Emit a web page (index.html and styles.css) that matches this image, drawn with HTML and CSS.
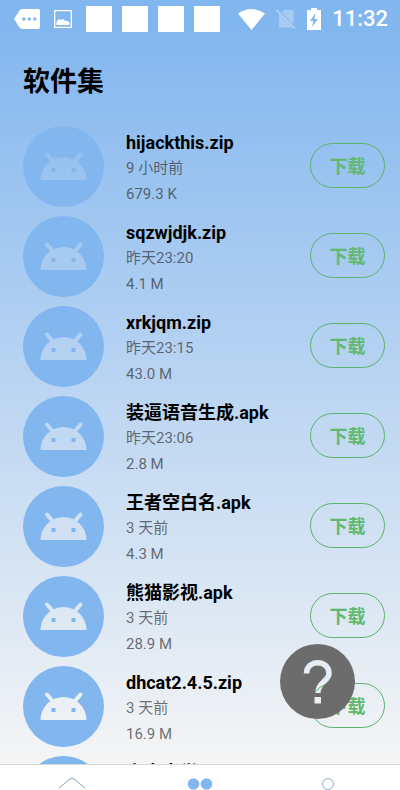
FILE: index.html
```html
<!DOCTYPE html>
<html lang="zh-CN">
<head>
<meta charset="utf-8">
<meta name="viewport" content="width=device-width, initial-scale=1">
<title>软件集</title>
<link rel="stylesheet" href="styles.css">
</head>
<body>
<svg class="defs" aria-hidden="true">
  <g id="head" stroke-linecap="round">
    <path d="M17.500 54a23 23 0 0 1 46 0z"/>
    <path stroke-width="4" d="M24 28.500L30 35.500M57.500 28.500L51.500 35.500"/>
  </g>
  <mask id="disc" maskUnits="userSpaceOnUse" x="0" y="0" width="81" height="81">
    <path fill="#fff" d="M0 0h81v81H0z"/>
    <use href="#head" fill="#000" stroke="#000" stroke-width="0"/>
    <path fill="#fff" d="M28.500 42h4v4h-4zM48.500 42h4v4h-4z"/>
  </mask>
  <symbol id="droid" viewBox="0 0 81 81">
    <circle cx="40.500" cy="40.500" r="40.500" fill="#82b6ef" mask="url(#disc)"/>
  </symbol>
</svg>
<div class="app">
  <header class="status">
    <div class="notices">
      <svg width="26" height="20" viewBox="0 0 26 20"><path fill="#fff" fill-rule="evenodd" d="M8 0H24Q26 0 26 2V18Q26 20 24 20H8Q6.500 20 5.500 18.500L0 10L5.500 1.500Q6.500 0 8 0zM9.800 8.300a1.700 1.700 0 1 0 .01 0zM15.300 8.300a1.700 1.700 0 1 0 .01 0zM20.800 8.300a1.700 1.700 0 1 0 .01 0z"/></svg>
      <svg width="18" height="18" viewBox="0 0 18 18"><path fill="none" stroke="#fff" stroke-width="1.300" d="M.7.7H17.300V17.300H.7z"/><path fill="#fff" d="M2.500 15V12Q4 8 7 10Q9 7.500 11 11Q13.500 10 15.500 13V15z"/></svg>
      <i class="box"></i><i class="box"></i><i class="box"></i><i class="box"></i>
    </div>
    <div class="system">
      <svg width="27" height="21" viewBox="0 0 27 21"><path fill="#fff" d="M0 4.500Q13.500-4.500 27 4.500L13.500 21z"/></svg>
      <svg width="20" height="20" viewBox="0 0 20 20"><g fill="#fff" fill-opacity=".3"><path d="M8 1H17.500V15.500L5.500 3.500z"/><path d="M3 4.500L16.500 18.500H3z"/></g><path stroke="#fff" stroke-opacity=".4" stroke-width="1.500" d="M.5 1L19 19.500"/></svg>
      <svg width="14" height="22" viewBox="0 0 14 22"><path fill="#fff" fill-rule="evenodd" d="M4 0H10V2H14V22H0V2H4zM8.500 5L3 13H6.300L5 19L11 11H7.500z"/></svg>
      <time>11:32</time>
    </div>
  </header>
  <h1>软件集</h1>
  <main>
    <ul class="list">
      <li><svg class="icon"><use href="#droid"/></svg><div class="info"><h2>hijackthis.zip</h2><p>9 小时前</p><p>679.3 K</p></div><button type="button">下载</button></li>
      <li><svg class="icon"><use href="#droid"/></svg><div class="info"><h2>sqzwjdjk.zip</h2><p>昨天23:20</p><p>4.1 M</p></div><button type="button">下载</button></li>
      <li><svg class="icon"><use href="#droid"/></svg><div class="info"><h2>xrkjqm.zip</h2><p>昨天23:15</p><p>43.0 M</p></div><button type="button">下载</button></li>
      <li><svg class="icon"><use href="#droid"/></svg><div class="info"><h2>装逼语音生成.apk</h2><p>昨天23:06</p><p>2.8 M</p></div><button type="button">下载</button></li>
      <li><svg class="icon"><use href="#droid"/></svg><div class="info"><h2>王者空白名.apk</h2><p>3 天前</p><p>4.3 M</p></div><button type="button">下载</button></li>
      <li><svg class="icon"><use href="#droid"/></svg><div class="info"><h2>熊猫影视.apk</h2><p>3 天前</p><p>28.9 M</p></div><button type="button">下载</button></li>
      <li><svg class="icon"><use href="#droid"/></svg><div class="info"><h2>dhcat2.4.5.zip</h2><p>3 天前</p><p>16.9 M</p></div><button type="button">下载</button></li>
      <li><svg class="icon"><use href="#droid"/></svg><div class="info"><h2>安卓大学</h2></div></li>
    </ul>
  </main>
  <nav>
    <a href="#home" aria-label="首页"><svg width="30" height="26" viewBox="0 0 30 26"><path fill="none" stroke="#7ba7bd" d="M2 11L13 2Q15 .5 17 2L28 11"/></svg></a>
    <a href="#apps" aria-label="软件"><svg width="26" height="26" viewBox="0 0 26 26"><g fill="#82b6ef"><circle cx="6.500" cy="7" r="5.800"/><circle cx="19.500" cy="7" r="5.800"/><circle cx="6.500" cy="20" r="5.800"/><circle cx="19.500" cy="20" r="5.800"/></g></svg></a>
    <a href="#me" aria-label="我的"><svg width="26" height="26" viewBox="0 0 26 26"><circle cx="13" cy="7" r="5.500" fill="none" stroke="#8bb4cf"/></svg></a>
  </nav>
  <button type="button" class="help" aria-label="帮助"><svg width="75" height="75" viewBox="0 0 75 75"><mask id="cut"><path fill="#fff" d="M0 0h75v75H0z"/><path fill="none" stroke="#000" stroke-width="5.500" d="M26.500 29.500C26.500 15 49 15 49 29.500C49 37 37.800 38 37.800 49"/><path d="M34.500 53h6.500v6.500h-6.500z"/></mask><circle cx="37.500" cy="37.500" r="37.500" fill="#6c6c6c" mask="url(#cut)"/></svg></button>
</div>
</body>
</html>
```

FILE: styles.css
```css
* { box-sizing: border-box; }
body, h1, h2, p, ul { margin: 0; padding: 0; }
body { font-family: Roboto, "Noto Sans CJK SC", sans-serif; color: #000; }
svg { display: block; flex: none; }
.defs { position: absolute; width: 0; height: 0; }
.app {
  position: relative;
  display: flex;
  flex-direction: column;
  height: 100vh;
  overflow: hidden;
  background: linear-gradient(#82b6ef 0, #82b6ef 3%, #f5f5f5 97%);
}
.status {
  display: flex;
  justify-content: space-between;
  align-items: center;
  height: 38px;
  padding: 0 12px 0 14px;
}
.notices, .system { display: flex; align-items: center; }
.notices { gap: 14px; }
.box { width: 26px; height: 26px; margin-right: -4px; background: #fff; }
.system { gap: 11px; }
.system time { color: #fff; font-size: 22px; font-weight: 500; line-height: 26px; }
h1 { padding: 24px 23px 20px; font-size: 27px; line-height: 40px; font-weight: 700; }
main { flex: 1; min-height: 0; overflow: hidden; }
.list { list-style: none; }
.list li {
  display: flex;
  align-items: flex-start;
  height: 90px;
  padding: 4px 15px 0 23px;
}
.icon { width: 81px; height: 81px; margin-right: 22px; }
.info { flex: 1; min-width: 0; padding-top: 4px; }
.info h2 { font-size: 18px; line-height: 25px; font-weight: 700; }
.info p { color: rgba(50, 50, 50, .7); font-size: 15px; line-height: 26px; }
.list button {
  width: 75px;
  height: 45px;
  margin-top: 17px;
  padding: 2px 0 0;
  border: 1px solid #5bb36c;
  border-radius: 23px;
  background: none;
  color: #62b870;
  font: 700 18px/26px Roboto, "Noto Sans CJK SC", sans-serif;
}
nav {
  display: flex;
  height: 26px;
  overflow: hidden;
  padding: 12px 8px 0;
  border-top: 1px solid #d8d8d8;
  background: #fff;
}
nav a { flex: 1; display: flex; justify-content: center; }
.help {
  position: absolute;
  right: 45px;
  bottom: 71px;
  padding: 0;
  border: 0;
  border-radius: 50%;
  background: none;
}
```
